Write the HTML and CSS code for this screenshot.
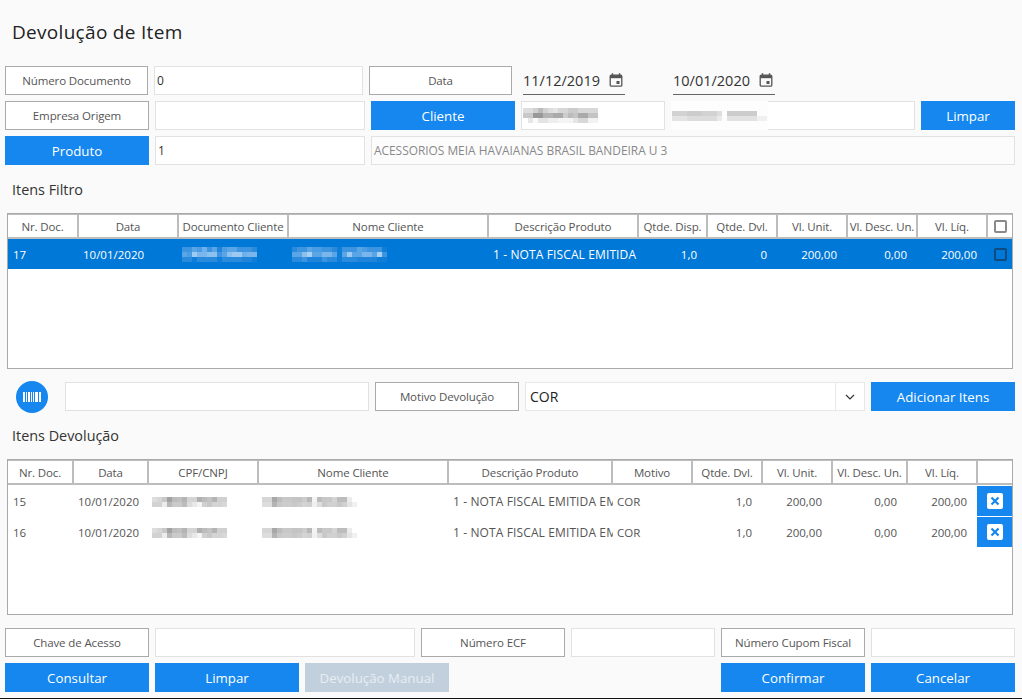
FILE: index.html
```html
<!DOCTYPE html>
<html lang="pt-BR">
<head>
<meta charset="utf-8">
<title>Devolução de Item</title>
<link rel="stylesheet" href="styles.css">
</head>
<body>
<main class="page">
  <h1 class="title">Devolução de Item</h1>

  <div class="row">
    <div class="lbl w143">Número Documento</div>
    <div class="inp w209">0</div>
    <div class="lbl w143">Data</div>
    <div class="date d1"><span class="dval">11/12/2019</span>
      <svg class="cal" viewBox="0 0 14 14" width="14" height="14"><rect x="1.2" y="2.2" width="11.6" height="11" rx="1.2" fill="none" stroke="#555" stroke-width="1.3"/><path d="M1.2 2.2h11.6v3H1.2z" fill="#555"/><path d="M3.5.3v2.4M10.5.3v2.4" stroke="#555" stroke-width="1.4"/><path d="M7.5 8h3v3h-3z" fill="#555"/></svg></div>
    <div class="date d2"><span class="dval">10/01/2020</span>
      <svg class="cal" viewBox="0 0 14 14" width="14" height="14"><rect x="1.2" y="2.2" width="11.6" height="11" rx="1.2" fill="none" stroke="#555" stroke-width="1.3"/><path d="M1.2 2.2h11.6v3H1.2z" fill="#555"/><path d="M3.5.3v2.4M10.5.3v2.4" stroke="#555" stroke-width="1.4"/><path d="M7.5 8h3v3h-3z" fill="#555"/></svg></div>
  </div>

  <div class="row">
    <div class="lbl w144">Empresa Origem</div>
    <div class="inp w210"></div>
    <button class="btn w144">Cliente</button>
    <div class="inp w144"><i class="mosaic tall soft s-doc"></i></div>
    <div class="inp w244 holder"><span class="smudge"><i class="mosaic soft s-name"></i></span></div>
    <button class="btn w94">Limpar</button>
  </div>

  <div class="row">
    <button class="btn w144">Produto</button>
    <div class="inp w210">1</div>
    <div class="inp grow muted">ACESSORIOS MEIA HAVAIANAS BRASIL BANDEIRA U 3</div>
  </div>

  <h2 class="section s1">Itens Filtro</h2>

  <section class="table">
    <div class="tr head cols-a">
      <div>Nr. Doc.</div><div>Data</div><div>Documento Cliente</div><div>Nome Cliente</div><div>Descrição Produto</div><div>Qtde. Disp.</div><div>Qtde. Dvl.</div><div>Vl. Unit.</div><div>Vl. Desc. Un.</div><div>Vl. Líq.</div><div><span class="check"></span></div>
    </div>
    <div class="tr body selected cols-a">
      <div class="pl">17</div><div class="pt">10/01/2020</div><div class="pm"><i class="mosaic tall b-doc"></i></div><div class="pm"><i class="mosaic tall b-name"></i></div><div class="pt desc">1 - NOTA FISCAL EMITIDA</div><div class="num">1,0</div><div class="num">0</div><div class="num">200,00</div><div class="num">0,00</div><div class="num">200,00</div><div><span class="check"></span></div>
    </div>
  </section>

  <div class="row toolbar">
    <span class="scan"><svg viewBox="0 0 18 10" width="18" height="10"><path d="M0 0h2v10H0zM3 0h1v10H3zM5 0h2v10H5zM8 0h1v10H8zM10 0h1v10h-1zM12 0h3v10h-3zM16 0h2v10h-2z" fill="#fff"/></svg></span>
    <div class="inp w304"></div>
    <div class="lbl w144">Motivo Devolução</div>
    <div class="select"><span class="val">COR</span><span class="arrow"><svg viewBox="0 0 10 6" width="10" height="6"><path d="M1 1l4 4 4-4" fill="none" stroke="#333" stroke-width="1.2"/></svg></span></div>
    <button class="btn w144">Adicionar Itens</button>
  </div>

  <h2 class="section s2">Itens Devolução</h2>

  <section class="table">
    <div class="tr head gap cols-b">
      <div>Nr. Doc.</div><div>Data</div><div>CPF/CNPJ</div><div>Nome Cliente</div><div>Descrição Produto</div><div>Motivo</div><div>Qtde. Dvl.</div><div>Vl. Unit.</div><div>Vl. Desc. Un.</div><div>Vl. Líq.</div><div></div>
    </div>
    <div class="tr body cols-b">
      <div class="pl">15</div><div class="pt">10/01/2020</div><div class="pm"><i class="mosaic g-doc"></i></div><div class="pm"><i class="mosaic g-name"></i></div><div class="pt desc">1 - NOTA FISCAL EMITIDA EM</div><div class="pt">COR</div><div class="num">1,0</div><div class="num">200,00</div><div class="num">0,00</div><div class="num">200,00</div><div class="del"><span class="x"><svg viewBox="0 0 10 10" width="10" height="10"><path d="M1.5 1.5l7 7M8.5 1.5l-7 7" stroke="#1587ef" stroke-width="2.2"/></svg></span></div>
    </div>
    <div class="tr body cols-b">
      <div class="pl">16</div><div class="pt">10/01/2020</div><div class="pm"><i class="mosaic g-doc"></i></div><div class="pm"><i class="mosaic g-name"></i></div><div class="pt desc">1 - NOTA FISCAL EMITIDA EM</div><div class="pt">COR</div><div class="num">1,0</div><div class="num">200,00</div><div class="num">0,00</div><div class="num">200,00</div><div class="del"><span class="x"><svg viewBox="0 0 10 10" width="10" height="10"><path d="M1.5 1.5l7 7M8.5 1.5l-7 7" stroke="#1587ef" stroke-width="2.2"/></svg></span></div>
    </div>
  </section>

  <div class="row foot-1">
    <div class="lbl w144">Chave de Acesso</div>
    <div class="inp w260"></div>
    <div class="lbl w144">Número ECF</div>
    <div class="inp w144"></div>
    <div class="lbl w144">Número Cupom Fiscal</div>
    <div class="inp w144"></div>
  </div>

  <div class="row">
    <button class="btn w144">Consultar</button>
    <button class="btn w144">Limpar</button>
    <button class="btn w144 off">Devolução Manual</button>
    <span class="grow"></span>
    <button class="btn w144">Confirmar</button>
    <button class="btn w144">Cancelar</button>
  </div>
</main>
</body>
</html>
```
FILE: styles.css
```css
* { box-sizing: border-box; }
html, body { margin: 0; height: 100%; }
body {
  background: #fafafa;
  color: #555;
  font: 11.5px/1 "Open Sans", "Noto Sans", "Liberation Sans", sans-serif;
  overflow: hidden;
}
.page {
  width: 1022px;
  height: 699px;
  padding: 0 7px 0 5px;
  border-bottom: 1px solid #111;
}
.title {
  margin: 0;
  padding: 22px 0 0 7px;
  height: 66px;
  font-size: 19px;
  line-height: 20px;
  font-weight: 500;
  letter-spacing: .3px;
  color: #222;
}
.row { display: flex; gap: 6px; height: 29px; margin-bottom: 6px; width: 1010px; }
.lbl, .inp, .btn {
  height: 29px;
  flex: none;
  display: flex;
  align-items: center;
}
.lbl {
  justify-content: center;
  background: #fff;
  border: 1px solid #aaa;
  color: #555;
  letter-spacing: -.12px;
}
.inp {
  background: #fff;
  border: 1px solid #e2e2e2;
  padding-left: 2px;
  font-size: 12px;
  color: #333;
  overflow: hidden;
}
.muted { background: #fcfcfc; color: #888; font-size: 11.9px; }
.btn {
  justify-content: center;
  border: 0;
  padding: 0;
  background: #1587ef;
  color: #fff;
  font: 13.3px "Open Sans", "Noto Sans", sans-serif;
}
.off { background: #c2d0de; color: #e6edf3; }
.grow { flex: 1 1 0; }
.w94 { width: 94px; }
.w143 { width: 143px; }
.w144 { width: 144px; }
.w209 { width: 209px; }
.w210 { width: 210px; }
.w244 { width: 244px; }
.w260 { width: 260px; }
.w304 { width: 304px; }
.date {
  flex: none;
  width: 102px;
  height: 29px;
  border-bottom: 1px solid #666;
  display: flex;
  align-items: center;
  justify-content: space-between;
  padding-right: 1px;
  color: #333;
  font-size: 14.5px;
}
.dval { padding-top: 2px; }
.d1 { margin-left: 5px; }
.d2 { margin-left: 42px; }
.cal { display: block; margin-right: 1px; }
.section {
  margin: 0;
  padding-left: 7px;
  font-size: 14.4px;
  line-height: 18px;
  font-weight: 500;
  color: #333;
}
.s1 { padding-top: 10px; height: 42px; }
.s2 { padding-top: 16px; height: 48px; }
.table {
  width: 1006px;
  height: 156px;
  margin-left: 2px;
  background: #fff;
  border: 1px solid #aaa;
}
.tr { display: grid; }
.cols-a { grid-template-columns: 71px 100px 110px 200px 150px 69px 70px 70px 70px 70px 24px; }
.cols-b { grid-template-columns: 66px 75px 110px 190px 164px 80px 70px 70px 75px 70px 34px; }
.head {
  height: 25px;
  border-top: 1px solid #bdbdbd;
  border-bottom: 2px solid #bdbdbd;
  text-align: center;
  letter-spacing: -.12px;
}
.gap { margin-bottom: 1px; }
.head > div {
  display: flex;
  align-items: center;
  justify-content: center;
  padding-top: 1px;
  white-space: nowrap;
  border-right: 2px solid #bdbdbd;
  color: #555;
  overflow: hidden;
}
.head > div:last-child { border-right: 0; }
.body { height: 30px; margin-bottom: 1px; color: #555; }
.body > div {
  display: flex;
  align-items: center;
  padding-top: 1px;
  white-space: nowrap;
  overflow: hidden;
}
.selected { background: #0078d7; color: #fff; font-weight: 500; }
.pl { padding-left: 5px; }
.pt { padding-left: 4px; }
.pm { padding-left: 3px; }
.body > div.desc { font-size: 12px; letter-spacing: .12px; }
.num { justify-content: flex-end; padding-right: 11px; }
.check {
  display: block;
  width: 13px;
  height: 13px;
  margin: -1px auto 0;
  border: 2px solid #8a8a8a;
  border-radius: 2px;
}
.selected .check { border-color: #0f4a80; margin: 0 auto; }
.body > div:last-child { justify-content: center; padding-top: 0; }
.body > div.del { background: #1587ef; margin-left: -1px; }
.x {
  width: 16px;
  height: 16px;
  background: #fff;
  border-radius: 2px;
  display: flex;
  align-items: center;
  justify-content: center;
}
.x svg, .scan svg, .arrow svg { display: block; }
.toolbar { margin-top: 13px; margin-bottom: 0; }
.scan {
  flex: none;
  width: 32px;
  height: 32px;
  margin: -1px 11px 0 11px;
  border-radius: 50%;
  background: #1587ef;
  display: flex;
  align-items: center;
  justify-content: center;
}
.select {
  flex: none;
  width: 340px;
  height: 29px;
  background: #fff;
  border: 1px solid #e8e8e8;
  display: flex;
  align-items: center;
  color: #222;
  font-size: 14px;
}
.val { flex: 1; padding-left: 4px; }
.arrow {
  width: 29px;
  height: 27px;
  border-left: 1px solid #e8e8e8;
  display: flex;
  align-items: center;
  justify-content: center;
}
.foot-1 { margin-top: 13px; }
.holder { position: relative; overflow: visible; }
.smudge {
  position: absolute;
  left: -1px;
  top: -1px;
  width: 97px;
  height: 29px;
  padding-left: 2px;
  background: #fdfdfd;
  display: flex;
  align-items: center;
}
.mosaic {
  display: block;
  flex: none;
  height: 10px;
  background-repeat: no-repeat;
  background-size: 100% 5px;
  background-position: 0 0, 0 5px, 0 10px;
}
.tall { height: 15px; }
.soft { filter: blur(.7px); margin-left: -1px; }
.g-doc, .b-doc, .s-doc { width: 75px; }
.g-name, .b-name, .s-name { width: 95px; }
.g-doc {
  background-image:
    linear-gradient(90deg, #ddd 0 5px, #d6d6d6 5px 10px, #c8c8c8 10px 15px, #a2a2a2 15px 20px, #bcbcbc 20px 25px, #c0c0c0 25px 30px, #b4b4b4 30px 35px, #d4d4d4 35px 45px, #b0b0b0 45px 50px, #bcbcbc 50px 55px, #c4c4c4 55px 60px, #b4b4b4 60px 65px, #d0d0d0 65px 75px),
    linear-gradient(90deg, #d2d2d2 0 10px, #ececec 10px 15px, #b8b8b8 15px 20px, #cacaca 20px 30px, #bcbcbc 30px 35px, #dcdcdc 35px 40px, #e8e8e8 40px 45px, #f4f4f4 45px 50px, #d0d0d0 50px 55px, #c8c8c8 55px 60px, #d4d4d4 60px 70px, #d8d8d8 70px 75px);
}
.g-name {
  background-image:
    linear-gradient(90deg, #d6d6d6 0 10px, #a8a8a8 10px 15px, #bcbcbc 15px 20px, #c8c8c8 20px 30px, #c4c4c4 30px 40px, #ccc 40px 45px, #b8b8b8 45px 50px, #f4f4f4 50px 55px, #bcbcbc 55px 60px, #c8c8c8 60px 70px, #d4d4d4 70px 75px, #bcbcbc 75px 85px, #ececec 85px 90px, #fff 90px 95px),
    linear-gradient(90deg, #ddd 0 10px, #b4b4b4 10px 15px, #c8c8c8 15px 20px, #ccc 20px 30px, #c8c8c8 30px 35px, #ccc 35px 40px, #d4d4d4 40px 45px, #d0d0d0 45px 50px, #f0f0f0 50px 55px, #ddd 55px 60px, #c8c8c8 60px 65px, #d0d0d0 65px 75px, #c8c8c8 75px 80px, #d0d0d0 80px 85px, #e4e4e4 85px 90px, #f0f0f0 90px 95px);
}
.s-doc {
  background-image:
    linear-gradient(90deg, #ddd 0 10px, #d0d0d0 10px 15px, #bbb 15px 20px, #d2d2d2 20px 25px, #ddd 25px 30px, #e4e4e4 30px 35px, #d6d6d6 35px 45px, #ccc 45px 55px, #d8d8d8 55px 75px),
    linear-gradient(90deg, #c8c8c8 0 10px, #999 10px 20px, #b4b4b4 20px 30px, #aaa 30px 40px, #ccc 40px 45px, #bbb 45px 50px, #c4c4c4 50px 55px, #aaa 55px 65px, #c4c4c4 65px 75px),
    linear-gradient(90deg, #fff 0 5px, #e6e6e6 5px 10px, #fafafa 10px 15px, #e4e4e4 15px 25px, #eee 25px 35px, #f4f4f4 35px 50px, #e6e6e6 50px 55px, #d8d8d8 55px 65px, #f2f2f2 65px 75px);
  background-size: 100% 5px;
}
.s-name {
  background-image:
    linear-gradient(90deg, #d2d2d2 0 15px, #ccc 15px 30px, #d2d2d2 30px 45px, #ddd 45px 50px, #fdfdfd 50px 55px, #ccc 55px 85px, #fdfdfd 85px 95px),
    linear-gradient(90deg, #e4e4e4 0 15px, #dcdcdc 15px 45px, #eaeaea 45px 50px, #fdfdfd 50px 55px, #e2e2e2 55px 85px, #f0f0f0 85px 95px);
}
.b-doc {
  background-image:
    linear-gradient(90deg, #3d94e0 0 10px, #5aa5e6 10px 15px, #4a9de3 15px 20px, #6db0ea 20px 25px, #3d94e0 25px 30px, #5aa5e6 30px 35px, #1f84da 35px 40px, #4a9de3 40px 45px, #5aa5e6 45px 55px, #3d94e0 55px 70px, #2a8bdc 70px 75px),
    linear-gradient(90deg, #5aa5e6 0 5px, #4a9de3 5px 10px, #9ccaf0 10px 15px, #7ab6ec 15px 25px, #8cc0ee 25px 35px, #3d94e0 35px 40px, #5aa5e6 40px 45px, #8cc0ee 45px 50px, #9ccaf0 50px 60px, #6db0ea 60px 65px, #7ab6ec 65px 75px),
    linear-gradient(90deg, #2a8bdc 0 10px, #0e7ed9 10px 15px, #2a8bdc 15px 35px, #0e7ed9 35px 40px, #2a8bdc 40px 60px, #1f84da 60px 70px, #0e7ed9 70px 75px);
}
.b-name {
  background-image:
    linear-gradient(90deg, #2a8bdc 0 5px, #3d94e0 5px 15px, #5aa5e6 15px 20px, #4a9de3 20px 30px, #3d94e0 30px 40px, #2a8bdc 40px 45px, #0e7ed9 45px 50px, #3d94e0 50px 65px, #5aa5e6 65px 70px, #4a9de3 70px 75px, #3d94e0 75px 90px, #0e7ed9 90px 95px),
    linear-gradient(90deg, #5aa5e6 0 10px, #8cc0ee 10px 15px, #a8d0f2 15px 20px, #5aa5e6 20px 30px, #7ab6ec 30px 40px, #5aa5e6 40px 45px, #0e7ed9 45px 50px, #5aa5e6 50px 55px, #9ccaf0 55px 60px, #5aa5e6 60px 70px, #7ab6ec 70px 80px, #5aa5e6 80px 85px, #a8d0f2 85px 90px, #3d94e0 90px 95px),
    linear-gradient(90deg, #2a8bdc 0 10px, #3d94e0 10px 15px, #1f84da 15px 30px, #3d94e0 30px 35px, #2a8bdc 35px 45px, #0e7ed9 45px 50px, #2a8bdc 50px 65px, #1f84da 65px 85px, #0e7ed9 85px 95px);
}
```
